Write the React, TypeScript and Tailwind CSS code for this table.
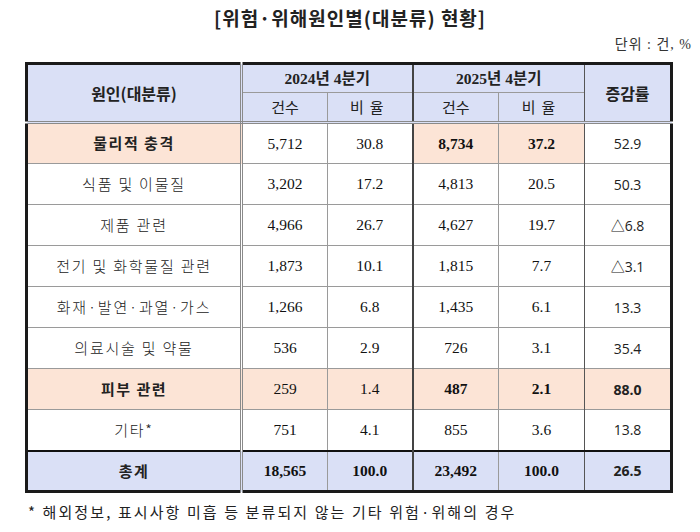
import React from 'react';

type Row = {
  label: string;
  a: string;
  b: string;
  c: string;
  d: string;
  e: string;
  kind: 'normal' | 'hlNew' | 'hlAll' | 'total';
};

const ROWS: Row[] = [
  { label: '물리적 충격', a: '5,712', b: '30.8', c: '8,734', d: '37.2', e: '52.9', kind: 'hlNew' },
  { label: '식품 및 이물질', a: '3,202', b: '17.2', c: '4,813', d: '20.5', e: '50.3', kind: 'normal' },
  { label: '제품 관련', a: '4,966', b: '26.7', c: '4,627', d: '19.7', e: '△6.8', kind: 'normal' },
  { label: '전기 및 화학물질 관련', a: '1,873', b: '10.1', c: '1,815', d: '7.7', e: '△3.1', kind: 'normal' },
  { label: '화재·발연·과열·가스', a: '1,266', b: '6.8', c: '1,435', d: '6.1', e: '13.3', kind: 'normal' },
  { label: '의료시술 및 약물', a: '536', b: '2.9', c: '726', d: '3.1', e: '35.4', kind: 'normal' },
  { label: '피부 관련', a: '259', b: '1.4', c: '487', d: '2.1', e: '88.0', kind: 'hlAll' },
  { label: '기타*', a: '751', b: '4.1', c: '855', d: '3.6', e: '13.8', kind: 'normal' },
  { label: '총계', a: '18,565', b: '100.0', c: '23,492', d: '100.0', e: '26.5', kind: 'total' },
];

const serif = "font-['Liberation_Serif','Noto_Sans_CJK_KR',serif]";
const sans = "font-['Open_Sans','Noto_Sans_CJK_KR',sans-serif]";

function DataRow({ row, last }: { row: Row; last: boolean }) {
  const hlNew = row.kind === 'hlNew' || row.kind === 'hlAll';
  const labelBg =
    row.kind === 'total' ? 'bg-[#dae0f6]' : row.kind === 'normal' ? 'bg-white' : 'bg-[#fce4d6]';
  const oldBg =
    row.kind === 'total' ? 'bg-[#dae0f6]' : row.kind === 'hlAll' ? 'bg-[#fce4d6]' : 'bg-white';
  const newBg = row.kind === 'total' ? 'bg-[#dae0f6]' : hlNew ? 'bg-[#fce4d6]' : 'bg-white';
  const rateBg = oldBg;
  const labelBold =
    row.kind !== 'normal' ? 'font-semibold tracking-[1.5px]' : 'font-light tracking-[1.8px]';
  const oldBold = row.kind === 'total' ? 'font-bold' : 'font-normal';
  const newBold = row.kind === 'normal' ? 'font-normal' : 'font-bold';
  const rateBold = row.kind === 'hlAll' || row.kind === 'total' ? 'font-bold' : 'font-normal';
  const rowBorder = last ? 'border-t-2 border-t-[#111]' : 'border-t border-t-[#9a9a9a]';

  return (
    <tr className="h-[41px]">
      <td className={`${labelBg} ${rowBorder} border-r-[3px] border-r-[#8a8a8a] border-double text-center text-[15px] text-[#222] ${labelBold} font-['Noto_Sans_CJK_KR',sans-serif]`}>
        {row.label}
      </td>
      <td className={`${oldBg} ${rowBorder} border-r border-r-[#9a9a9a] text-center text-[15.5px] text-[#111] ${oldBold} ${serif}`}>
        {row.a}
      </td>
      <td className={`${oldBg} ${rowBorder} border-r-2 border-r-[#444] text-center text-[15.5px] text-[#111] ${oldBold} ${serif}`}>
        {row.b}
      </td>
      <td className={`${newBg} ${rowBorder} border-r border-r-[#9a9a9a] text-center text-[15.5px] text-[#111] ${newBold} ${serif}`}>
        {row.c}
      </td>
      <td className={`${newBg} ${rowBorder} border-r border-r-[#555] text-center text-[15.5px] text-[#111] ${newBold} ${serif}`}>
        {row.d}
      </td>
      <td className={`${rateBg} ${rowBorder} text-center text-[14px] text-[#222] ${rateBold} ${sans}`}>
        {row.e}
      </td>
    </tr>
  );
}

export default function App() {
  return (
    <div className="w-[700px] h-[532px] bg-white flex flex-col text-[#111]">
      <div className="mt-[6px] h-[24px] leading-[24px] text-center text-[19px] font-semibold tracking-[1px] text-[#222] font-['Noto_Sans_CJK_KR',sans-serif]">
        [위험·위해원인별(대분류) 현황]
      </div>
      <div className={`mt-[4px] h-[22px] leading-[22px] text-right pr-[8px] text-[14px] tracking-[1px] text-[#333] ${serif}`}>
        단위 : 건, %
      </div>
      <div className="mt-[6px] pl-[25px]">
        <table className="table-fixed border-collapse w-[648px] border-[3px] border-[#1a1a1a]">
          <colgroup>
            <col className="w-[215px]" />
            <col className="w-[86px]" />
            <col className="w-[85px]" />
            <col className="w-[86px]" />
            <col className="w-[86px]" />
            <col className="w-[87px]" />
          </colgroup>
          <thead>
            <tr className="h-[29px] bg-[#dae0f6]">
              <th
                rowSpan={2}
                className="border-r-[3px] border-r-[#8a8a8a] border-double border-b-[3px] border-b-[#8a8a8a] text-center text-[16px] font-semibold text-[#222] font-['Noto_Sans_CJK_KR',sans-serif]"
              >
                원인(대분류)
              </th>
              <th
                colSpan={2}
                className={`border-r-2 border-r-[#444] border-b border-b-[#9a9a9a] text-center text-[15.5px] font-bold text-[#222] ${serif}`}
              >
                2024년 4분기
              </th>
              <th
                colSpan={2}
                className={`border-r border-r-[#555] border-b border-b-[#9a9a9a] text-center text-[15.5px] font-bold text-[#222] ${serif}`}
              >
                2025년 4분기
              </th>
              <th
                rowSpan={2}
                className="border-b-[3px] border-b-[#8a8a8a] border-double text-center text-[16px] font-semibold text-[#222] font-['Noto_Sans_CJK_KR',sans-serif]"
              >
                증감률
              </th>
            </tr>
            <tr className="h-[30px] bg-[#dae0f6]">
              <th className="border-r border-r-[#9a9a9a] border-b-[3px] border-b-[#8a8a8a] border-double text-center text-[15px] font-normal text-[#222] font-['Noto_Sans_CJK_KR',sans-serif]">
                건수
              </th>
              <th className="border-r-2 border-r-[#444] border-b-[3px] border-b-[#8a8a8a] border-double text-center text-[15px] font-normal tracking-[6px] text-[#222] font-['Noto_Sans_CJK_KR',sans-serif]">
                비율
              </th>
              <th className="border-r border-r-[#9a9a9a] border-b-[3px] border-b-[#8a8a8a] border-double text-center text-[15px] font-normal text-[#222] font-['Noto_Sans_CJK_KR',sans-serif]">
                건수
              </th>
              <th className="border-r border-r-[#555] border-b-[3px] border-b-[#8a8a8a] border-double text-center text-[15px] font-normal tracking-[6px] text-[#222] font-['Noto_Sans_CJK_KR',sans-serif]">
                비율
              </th>
            </tr>
          </thead>
          <tbody>
            {ROWS.map((r, i) => (
              <DataRow key={r.label} row={r} last={i === ROWS.length - 1} />
            ))}
          </tbody>
        </table>
      </div>
      <div className="mt-[8px] h-[22px] leading-[22px] pl-[28px] text-[15px] tracking-[2.1px] text-[#222] font-['Noto_Sans_CJK_KR',sans-serif]">
        * 해외정보, 표시사항 미흡 등 분류되지 않는 기타 위험·위해의 경우
      </div>
    </div>
  );
}
